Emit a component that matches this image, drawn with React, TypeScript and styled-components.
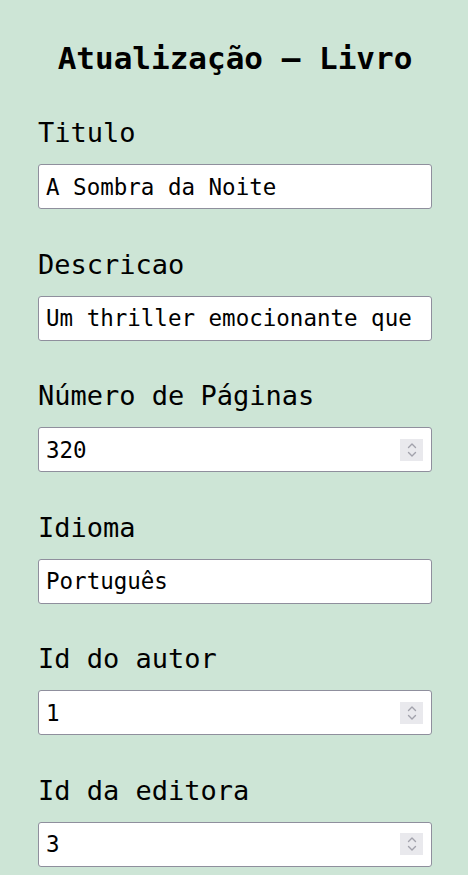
import styled, { createGlobalStyle } from "styled-components";

const GlobalStyle = createGlobalStyle`
  html, body {
    margin: 0;
    padding: 0;
    background-color: #cde5d6;
  }
  body {
    font-family: "DejaVu Sans Mono", "Liberation Mono", monospace;
    color: #000;
  }
`;

const Page = styled.div`
  width: 468px;
  min-height: 875px;
  box-sizing: border-box;
  padding: 38px 36px 0 38px;
  background-color: #cde5d6;
`;

const Title = styled.h1`
  margin: 0 0 39px;
  font-size: 31px;
  line-height: 40px;
  font-weight: 700;
  text-align: center;
`;

const Form = styled.form`
  display: flex;
  flex-direction: column;
  gap: 39.5px;
`;

const Field = styled.div`
  display: flex;
  flex-direction: column;
  gap: 15px;
`;

const Label = styled.label`
  font-size: 27px;
  line-height: 32px;
`;

const InputWrap = styled.div`
  position: relative;
`;

const Input = styled.input<{ $spin?: boolean }>`
  width: 100%;
  height: 45px;
  box-sizing: border-box;
  margin: 0;
  padding: 0 ${(p) => (p.$spin ? "36px" : "9px")} 0 7px;
  border: 1px solid #8f8f9d;
  border-radius: 3px;
  background: #fff;
  font-family: "DejaVu Sans Mono", "Liberation Mono", monospace;
  font-size: 22.5px;
  color: #000;
  outline: none;
  -moz-appearance: textfield;
  &::-webkit-outer-spin-button,
  &::-webkit-inner-spin-button {
    -webkit-appearance: none;
    margin: 0;
  }
`;

const Spinner = styled.span`
  position: absolute;
  right: 9px;
  top: 50%;
  transform: translateY(-50%);
  width: 23px;
  height: 22px;
  background: #e9e9ed;
  display: flex;
  align-items: center;
  justify-content: center;
  pointer-events: none;
`;

const SpinIcon = () => (
  <svg width="12" height="18" viewBox="0 0 12 18" fill="none">
    <path d="M2.5 6.5 L6 3 L9.5 6.5" stroke="#a2a2ac" strokeWidth="1.4" strokeLinecap="round" strokeLinejoin="round" />
    <path d="M2.5 11.5 L6 15 L9.5 11.5" stroke="#a2a2ac" strokeWidth="1.4" strokeLinecap="round" strokeLinejoin="round" />
  </svg>
);

type FieldDef = { label: string; value: string; number?: boolean };

const fields: FieldDef[] = [
  { label: "Titulo", value: "A Sombra da Noite" },
  { label: "Descricao", value: "Um thriller emocionante que envolve mistério e suspense." },
  { label: "Número de Páginas", value: "320", number: true },
  { label: "Idioma", value: "Português" },
  { label: "Id do autor", value: "1", number: true },
  { label: "Id da editora", value: "3", number: true },
];

const App = (): JSX.Element => {
  return (
    <>
      <GlobalStyle />
      <Page>
        <Title>Atualização – Livro</Title>
        <Form onSubmit={(e) => e.preventDefault()}>
          {fields.map((f) => (
            <Field key={f.label}>
              <Label>{f.label}</Label>
              <InputWrap>
                <Input
                  $spin={f.number}
                  type={f.number ? "number" : "text"}
                  defaultValue={f.value}
                />
                {f.number && (
                  <Spinner>
                    <SpinIcon />
                  </Spinner>
                )}
              </InputWrap>
            </Field>
          ))}
        </Form>
      </Page>
    </>
  );
};

export default App;
